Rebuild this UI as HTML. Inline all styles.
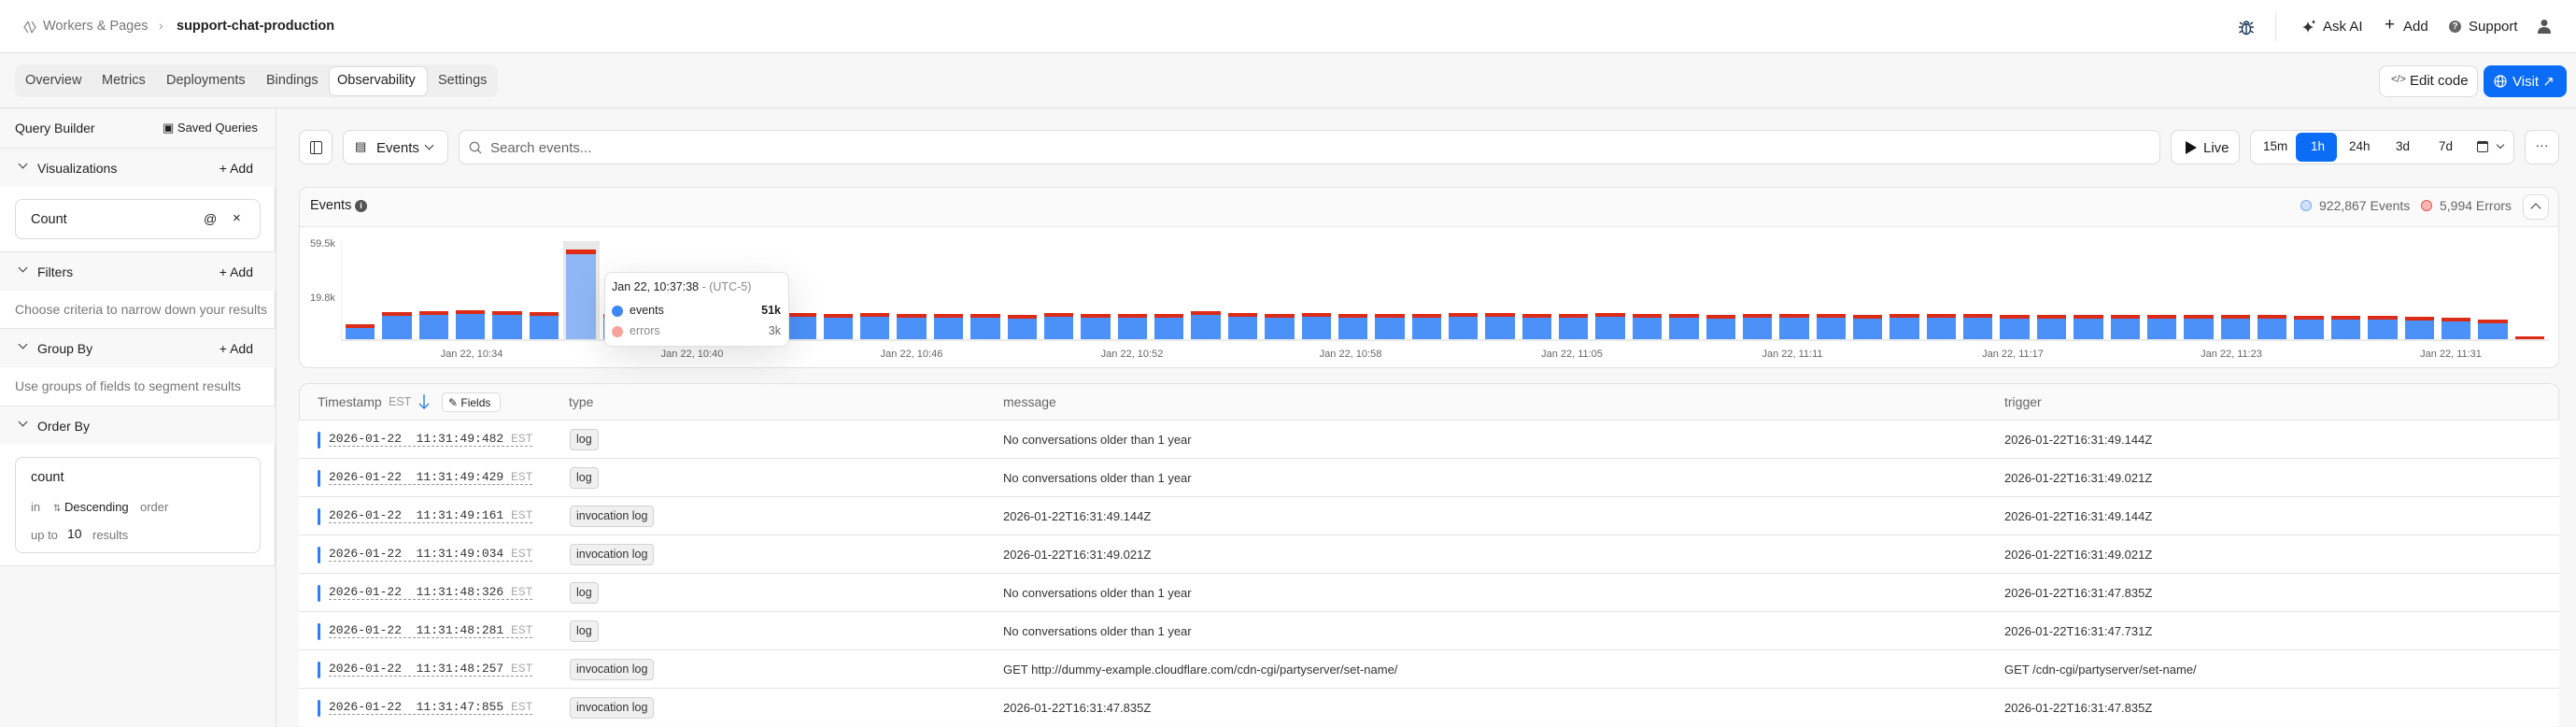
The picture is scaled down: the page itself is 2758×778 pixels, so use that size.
<!DOCTYPE html>
<html style="overflow:hidden;width:2758px;height:778px"><head><meta charset="utf-8">
<style>
*{box-sizing:border-box;margin:0;padding:0}
body{width:2758px;height:778px;overflow:hidden;background:#f7f7f7;font-family:"Liberation Sans",sans-serif;color:#1f1f1f;font-size:14px;position:relative}
.a{position:absolute}
.top{left:0;top:0;width:2758px;height:57px;background:#fff;border-bottom:1px solid #e0e0e0}
.tabs{left:16px;top:69px;width:517px;height:35px;background:#efefef;border-radius:8px}
.tab{position:absolute;top:0;height:35px;line-height:35px;font-size:14.5px;color:#444}
.btn{position:absolute;background:#fff;border:1px solid #dcdcdc;border-radius:8px}
.side{left:0;top:116px;width:295px;height:490px;background:#fff;border-right:1px solid #e2e2e2;border-bottom:1px solid #e2e2e2}
.sideline{left:295px;top:116px;width:1px;height:662px;background:#e2e2e2}
.sh{position:absolute;left:0;width:295px;height:42px;background:#f8f8f8;border-top:1px solid #e4e4e4;font-size:14px}
.sh .t{position:absolute;left:40px;top:13px}
.sh .chev{position:absolute;left:21px;top:13px;width:7px;height:7px;border-right:1.4px solid #333;border-bottom:1.4px solid #333;transform:rotate(45deg)}
.sh .add{position:absolute;right:24px;top:13px}
.gray{color:#777}
.card{left:320px;width:2420px;background:#fff;border:1px solid #e2e2e2;border-radius:10px;overflow:hidden}
.bars{left:366px;top:258px;width:2362px;height:105px;display:grid;grid-template-columns:repeat(60,1fr);grid-template-rows:105px;overflow:hidden}
.bars>div{display:flex;flex-direction:column;justify-content:flex-end;padding:0 4px}
.bars i{display:block;background:#4b91f7;border-top:4px solid #dc2b17}
.xl{position:absolute;top:373px;font-size:11px;color:#666;transform:translateX(-50%)}
.row{position:absolute;left:320px;width:2420px;height:41px;background:#fff;border-top:1px solid #e4e4e4}
.row .bl{position:absolute;left:20px;top:12px;width:3px;height:18px;background:#2f7cf6;border-radius:2px}
.row .ts{position:absolute;left:32px;top:12px;font-family:"Liberation Mono",monospace;font-size:13px;color:#333;border-bottom:1px dashed #999;line-height:15px;white-space:pre}
.row .ts span{color:#aaa}
.row .bd{position:absolute;left:290px;top:9px;height:23px;line-height:21px;padding:0 6px;background:#f0f0f0;border:1px solid #d2d2d2;border-radius:4px;font-size:12.5px;color:#333}
.row .m{position:absolute;left:754px;top:13px;font-size:13px;color:#333}
.row .tr{position:absolute;left:1826px;top:13px;font-size:13px;color:#333}
</style></head><body>
<div class="a top"></div>
<svg class="a" style="left:24px;top:21px" width="16" height="16" viewBox="0 0 16 16"><path d="M6 2 L2 8 L6 14 M10 2 L14 8 L10 14 M6 2 L10 14" fill="none" stroke="#888" stroke-width="1.2"/></svg>
<div class="a" style="left:46px;top:20px;font-size:14.5px;color:#777">Workers &amp; Pages</div>
<div class="a" style="left:170px;top:19px;font-size:14px;color:#999">›</div>
<div class="a" style="left:189px;top:20px;font-size:14.5px;color:#222;font-weight:600">support-chat-production</div>
<svg class="a" style="left:2395px;top:19px" width="20" height="20" viewBox="0 0 20 20" fill="none" stroke="#1b3553" stroke-width="1.4"><ellipse cx="10" cy="12" rx="4.5" ry="5.5"/><path d="M7 6 Q10 2 13 6 M10 7v10 M5.5 10H2 M14.5 10H18 M5.5 14L2.5 16 M14.5 14L17.5 16 M6 7L3 5 M14 7L17 5"/></svg>
<div class="a" style="left:2436px;top:14px;width:1px;height:30px;background:#e3e3e3"></div>
<svg class="a" style="left:2465px;top:20px" width="16" height="16" viewBox="0 0 16 16"><path d="M6 3 Q7 8 12 9 Q7 10 6 15 Q5 10 0 9 Q5 8 6 3Z" fill="#333"/><path d="M12 1 Q12.5 3 14 3.5 Q12.5 4 12 6 Q11.5 4 10 3.5 Q11.5 3 12 1Z" fill="#333"/></svg>
<div class="a" style="left:2487px;top:20px;font-size:15px">Ask AI</div>
<div class="a" style="left:2553px;top:17px;font-size:19px;line-height:20px">+</div>
<div class="a" style="left:2573px;top:20px;font-size:15px">Add</div>
<div class="a" style="left:2622px;top:22px;width:13px;height:13px;border-radius:50%;background:#666;color:#fff;font-size:10px;line-height:13px;text-align:center;font-weight:bold">?</div>
<div class="a" style="left:2643px;top:20px;font-size:15px">Support</div>
<svg class="a" style="left:2716px;top:20px" width="16" height="16" viewBox="0 0 16 16" fill="#555"><circle cx="8" cy="4.5" r="3.5"/><path d="M1 16 Q1 9 8 9 Q15 9 15 16Z"/></svg>

<div class="a tabs"></div>
<div class="tab" style="left:27px;top:69px">Overview</div>
<div class="tab" style="left:109px;top:69px">Metrics</div>
<div class="tab" style="left:178px;top:69px">Deployments</div>
<div class="tab" style="left:285px;top:69px">Bindings</div>
<div class="btn" style="left:352px;top:71px;width:106px;height:32px;border-radius:7px"></div>
<div class="tab" style="left:361px;top:69px;color:#222">Observability</div>
<div class="tab" style="left:469px;top:69px">Settings</div>
<div class="a" style="left:0;top:115px;width:2758px;height:1px;background:#e0e0e0"></div>
<div class="btn" style="left:2547px;top:70px;width:106px;height:34px"></div>
<div class="a" style="left:2560px;top:79px;font-size:11px;color:#444">&lt;/&gt;</div>
<div class="a" style="left:2580px;top:78px;font-size:15px">Edit code</div>
<div class="a" style="left:2659px;top:70px;width:89px;height:34px;background:#0b6cf5;border-radius:8px;color:#fff"><svg class="a" style="left:11px;top:10px" width="14" height="14" viewBox="0 0 14 14" fill="none" stroke="#fff" stroke-width="1.2"><circle cx="7" cy="7" r="6"/><ellipse cx="7" cy="7" rx="2.6" ry="6"/><path d="M1 7h12"/></svg><span class="a" style="left:31px;top:8px;font-size:15px">Visit ↗</span></div>

<div class="a side"></div>
<div class="a sideline"></div>
<div class="sh" style="top:116px;border-top:none;height:42px"><span class="a" style="left:16px;top:13px">Query Builder</span><span class="a" style="left:174px;top:13px;font-size:13px">▣ Saved Queries</span></div>
<div class="sh" style="top:158px"><i class="chev"></i><span class="t">Visualizations</span><span class="add">+ Add</span></div>
<div class="a" style="left:16px;top:213px;width:263px;height:43px;border:1px solid #dcdcdc;border-radius:8px;background:#fff"><span class="a" style="left:16px;top:13px;font-size:14.5px">Count</span><span class="a" style="left:201px;top:12px;font-size:14px">@</span><span class="a" style="left:232px;top:11px;font-size:15px">×</span></div>
<div class="sh" style="top:269px"><i class="chev"></i><span class="t">Filters</span><span class="add">+ Add</span></div>
<div class="a gray" style="left:16px;top:323px;font-size:14px">Choose criteria to narrow down your results</div>
<div class="sh" style="top:351px"><i class="chev"></i><span class="t">Group By</span><span class="add">+ Add</span></div>
<div class="a gray" style="left:16px;top:405px;font-size:14px">Use groups of fields to segment results</div>
<div class="sh" style="top:434px"><i class="chev"></i><span class="t">Order By</span></div>
<div class="a" style="left:16px;top:489px;width:263px;height:103px;border:1px solid #dcdcdc;border-radius:8px;background:#fff"><span class="a" style="left:16px;top:13px;font-size:14.5px">count</span><span class="a gray" style="left:16px;top:45px;font-size:13px">in</span><span class="a" style="left:40px;top:45px;font-size:13px"><span style="color:#777;font-size:10px">⇅</span> Descending</span><span class="a gray" style="left:133px;top:45px;font-size:13px">order</span><span class="a gray" style="left:16px;top:75px;font-size:13px">up to</span><span class="a" style="left:55px;top:73px;font-size:14px">10</span><span class="a gray" style="left:82px;top:75px;font-size:13px">results</span></div>

<!-- toolbar -->
<div class="btn" style="left:320px;top:139px;width:36px;height:37px"><div class="a" style="left:11px;top:11px;width:13px;height:14px;border:1.3px solid #333;border-radius:2px"></div><div class="a" style="left:15px;top:11px;width:1.3px;height:14px;background:#333"></div></div>
<div class="btn" style="left:367px;top:139px;width:113px;height:37px"><span class="a" style="left:12px;top:9px;font-size:13px">▤</span><span class="a" style="left:35px;top:10px;font-size:15px">Events</span><i class="a" style="left:88px;top:12px;width:7px;height:7px;border-right:1.4px solid #333;border-bottom:1.4px solid #333;transform:rotate(45deg)"></i></div>
<div class="btn" style="left:491px;top:139px;width:1822px;height:37px"><svg class="a" style="left:10px;top:11px" width="14" height="14" viewBox="0 0 14 14" fill="none" stroke="#777" stroke-width="1.3"><circle cx="6" cy="6" r="4.7"/><path d="M9.5 9.5L13 13"/></svg><span class="a" style="left:33px;top:10px;font-size:15px;color:#666">Search events...</span></div>
<div class="btn" style="left:2324px;top:139px;width:74px;height:37px"><svg class="a" style="left:15px;top:11px" width="12" height="14"><path d="M0 0L12 7L0 14Z" fill="#111"/></svg><span class="a" style="left:34px;top:10px;font-size:15px">Live</span></div>
<div class="btn" style="left:2409px;top:139px;width:283px;height:37px"></div>
<div class="a" style="left:2458px;top:142px;width:44px;height:31px;background:#0b6cf5;border-radius:6px"></div>
<div class="a" style="left:2423px;top:149px;font-size:13.5px">15m</div>
<div class="a" style="left:2474px;top:149px;font-size:13.5px;color:#fff">1h</div>
<div class="a" style="left:2515px;top:149px;font-size:13.5px">24h</div>
<div class="a" style="left:2565px;top:149px;font-size:13.5px">3d</div>
<div class="a" style="left:2611px;top:149px;font-size:13.5px">7d</div>
<div class="a" style="left:2652px;top:151px;width:12px;height:12px;border:1.3px solid #333;border-radius:2px;border-top-width:3px"></div>
<i class="a" style="left:2674px;top:152px;width:6px;height:6px;border-right:1.3px solid #333;border-bottom:1.3px solid #333;transform:rotate(45deg)"></i>
<div class="btn" style="left:2703px;top:139px;width:37px;height:37px;text-align:center;line-height:30px;font-size:14px">···</div>

<!-- chart card -->
<div class="a card" style="top:200px;height:194px;background:#fafafa"></div>
<div class="a" style="left:321px;top:242px;width:2418px;height:151px;background:#fff;border-top:1px solid #e6e6e6;border-radius:0 0 10px 10px"></div>
<div class="a" style="left:332px;top:212px;font-size:14.5px">Events</div>
<div class="a" style="left:380px;top:214px;width:13px;height:13px;border-radius:50%;background:#555;color:#fff;font-size:9px;text-align:center;line-height:13px;font-weight:bold">i</div>
<div class="a" style="left:2463px;top:214px;width:12px;height:12px;border-radius:50%;background:#cfe0fb;border:1px solid #7fa9f0"></div>
<div class="a" style="left:2483px;top:212px;font-size:14px;color:#666">922,867 Events</div>
<div class="a" style="left:2592px;top:214px;width:12px;height:12px;border-radius:50%;background:#f8b8b0;border:1px solid #e0564a"></div>
<div class="a" style="left:2612px;top:212px;font-size:14px;color:#666">5,994 Errors</div>
<div class="btn" style="left:2701px;top:208px;width:28px;height:27px"><i class="a" style="left:9px;top:10px;width:8px;height:8px;border-left:1.4px solid #333;border-top:1.4px solid #333;transform:rotate(45deg)"></i></div>
<div class="a" style="left:332px;top:255px;font-size:11px;color:#666">59.5k</div>
<div class="a" style="left:332px;top:313px;font-size:11px;color:#666">19.8k</div>
<div class="a" style="left:365px;top:258px;width:1px;height:106px;background:#eee"></div>
<div class="a" style="left:365px;top:363px;width:2364px;height:2px;background:#eaeaea"></div>
<div class="a" style="left:603px;top:258px;width:39px;height:106px;background:#e9e9e9"></div>
<div class="a bars">
<div><i style="height:16px"></i></div><div><i style="height:29px"></i></div><div><i style="height:30px"></i></div><div><i style="height:31px"></i></div><div><i style="height:30px"></i></div><div><i style="height:29px"></i></div>
<div><i style="height:96px;background:#8fb7f6;border-top-width:5px;border-color:#e02a14"></i></div>
<div><i style="height:27px"></i></div><div><i style="height:27px"></i></div><div><i style="height:27px"></i></div><div><i style="height:27px"></i></div><div><i style="height:28px"></i></div><div><i style="height:28px"></i></div><div><i style="height:27px"></i></div><div><i style="height:28px"></i></div><div><i style="height:27px"></i></div>
<div><i style="height:27px"></i></div><div><i style="height:27px"></i></div><div><i style="height:26px"></i></div><div><i style="height:28px"></i></div><div><i style="height:27px"></i></div><div><i style="height:27px"></i></div><div><i style="height:27px"></i></div><div><i style="height:30px"></i></div><div><i style="height:28px"></i></div><div><i style="height:27px"></i></div>
<div><i style="height:28px"></i></div><div><i style="height:27px"></i></div><div><i style="height:27px"></i></div><div><i style="height:27px"></i></div><div><i style="height:28px"></i></div><div><i style="height:28px"></i></div><div><i style="height:27px"></i></div><div><i style="height:27px"></i></div><div><i style="height:28px"></i></div><div><i style="height:27px"></i></div>
<div><i style="height:27px"></i></div><div><i style="height:26px"></i></div><div><i style="height:27px"></i></div><div><i style="height:27px"></i></div><div><i style="height:27px"></i></div><div><i style="height:26px"></i></div><div><i style="height:27px"></i></div><div><i style="height:27px"></i></div><div><i style="height:27px"></i></div><div><i style="height:26px"></i></div>
<div><i style="height:26px"></i></div><div><i style="height:26px"></i></div><div><i style="height:26px"></i></div><div><i style="height:26px"></i></div><div><i style="height:26px"></i></div><div><i style="height:26px"></i></div><div><i style="height:26px"></i></div><div><i style="height:25px"></i></div><div><i style="height:25px"></i></div><div><i style="height:25px"></i></div>
<div><i style="height:24px"></i></div><div><i style="height:23px"></i></div><div><i style="height:21px"></i></div><div><i style="height:3px;border-top-width:3px;background:none"></i></div>
</div>
<div class="xl" style="left:505px">Jan 22, 10:34</div>
<div class="xl" style="left:741px">Jan 22, 10:40</div>
<div class="xl" style="left:976px">Jan 22, 10:46</div>
<div class="xl" style="left:1212px">Jan 22, 10:52</div>
<div class="xl" style="left:1446px">Jan 22, 10:58</div>
<div class="xl" style="left:1683px">Jan 22, 11:05</div>
<div class="xl" style="left:1919px">Jan 22, 11:11</div>
<div class="xl" style="left:2155px">Jan 22, 11:17</div>
<div class="xl" style="left:2389px">Jan 22, 11:23</div>
<div class="xl" style="left:2624px">Jan 22, 11:31</div>

<!-- table -->
<div class="a card" style="top:410px;height:368px;background:#fafafa;border-bottom:none;border-radius:10px 10px 0 0"></div>
<div class="a" style="left:340px;top:422px;font-size:14px;color:#666">Timestamp</div>
<div class="a" style="left:416px;top:423px;font-size:12.5px;color:#999">EST</div>
<svg class="a" style="left:448px;top:421px" width="12" height="18" viewBox="0 0 12 18" fill="none" stroke="#2f7cf6" stroke-width="1.4"><path d="M6 1v15M1 11l5 5 5-5"/></svg>
<div class="btn" style="left:473px;top:420px;width:63px;height:21px;border-radius:5px"><span class="a" style="left:6px;top:3px;font-size:12px">✎ Fields</span></div>
<div class="a" style="left:609px;top:422px;font-size:14px;color:#666">type</div>
<div class="a" style="left:1074px;top:422px;font-size:14px;color:#666">message</div>
<div class="a" style="left:2146px;top:422px;font-size:14px;color:#666">trigger</div>

<div class="row" style="top:449px"><i class="bl"></i><span class="ts">2026-01-22  11:31:49:482 <span>EST</span></span><span class="bd">log</span><span class="m">No conversations older than 1 year</span><span class="tr">2026-01-22T16:31:49.144Z</span></div>
<div class="row" style="top:490px"><i class="bl"></i><span class="ts">2026-01-22  11:31:49:429 <span>EST</span></span><span class="bd">log</span><span class="m">No conversations older than 1 year</span><span class="tr">2026-01-22T16:31:49.021Z</span></div>
<div class="row" style="top:531px"><i class="bl"></i><span class="ts">2026-01-22  11:31:49:161 <span>EST</span></span><span class="bd">invocation log</span><span class="m">2026-01-22T16:31:49.144Z</span><span class="tr">2026-01-22T16:31:49.144Z</span></div>
<div class="row" style="top:572px"><i class="bl"></i><span class="ts">2026-01-22  11:31:49:034 <span>EST</span></span><span class="bd">invocation log</span><span class="m">2026-01-22T16:31:49.021Z</span><span class="tr">2026-01-22T16:31:49.021Z</span></div>
<div class="row" style="top:613px"><i class="bl"></i><span class="ts">2026-01-22  11:31:48:326 <span>EST</span></span><span class="bd">log</span><span class="m">No conversations older than 1 year</span><span class="tr">2026-01-22T16:31:47.835Z</span></div>
<div class="row" style="top:654px"><i class="bl"></i><span class="ts">2026-01-22  11:31:48:281 <span>EST</span></span><span class="bd">log</span><span class="m">No conversations older than 1 year</span><span class="tr">2026-01-22T16:31:47.731Z</span></div>
<div class="row" style="top:695px"><i class="bl"></i><span class="ts">2026-01-22  11:31:48:257 <span>EST</span></span><span class="bd">invocation log</span><span class="m">GET http://dummy-example.cloudflare.com/cdn-cgi/partyserver/set-name/</span><span class="tr">GET /cdn-cgi/partyserver/set-name/</span></div>
<div class="row" style="top:736px"><i class="bl"></i><span class="ts">2026-01-22  11:31:47:855 <span>EST</span></span><span class="bd">invocation log</span><span class="m">2026-01-22T16:31:47.835Z</span><span class="tr">2026-01-22T16:31:47.835Z</span></div>

<!-- tooltip -->
<div class="a" style="left:647px;top:291px;width:198px;height:80px;background:#fff;border:1px solid #e0e0e0;border-radius:8px;box-shadow:0 10px 40px rgba(0,0,0,0.12)">
<span class="a" style="left:7px;top:8px;font-size:12.5px;color:#222">Jan 22, 10:37:38 <span style="color:#888">- (UTC-5)</span></span>
<i class="a" style="left:7px;top:35px;width:12px;height:12px;border-radius:50%;background:#3f87f5"></i>
<span class="a" style="left:26px;top:33px;font-size:12.5px">events</span>
<span class="a" style="right:8px;top:33px;font-size:12.5px;font-weight:600">51k</span>
<i class="a" style="left:7px;top:57px;width:12px;height:12px;border-radius:50%;background:#f5a49c"></i>
<span class="a" style="left:26px;top:55px;font-size:12.5px;color:#888">errors</span>
<span class="a" style="right:8px;top:55px;font-size:12.5px;color:#666">3k</span>
</div>
</body></html>
